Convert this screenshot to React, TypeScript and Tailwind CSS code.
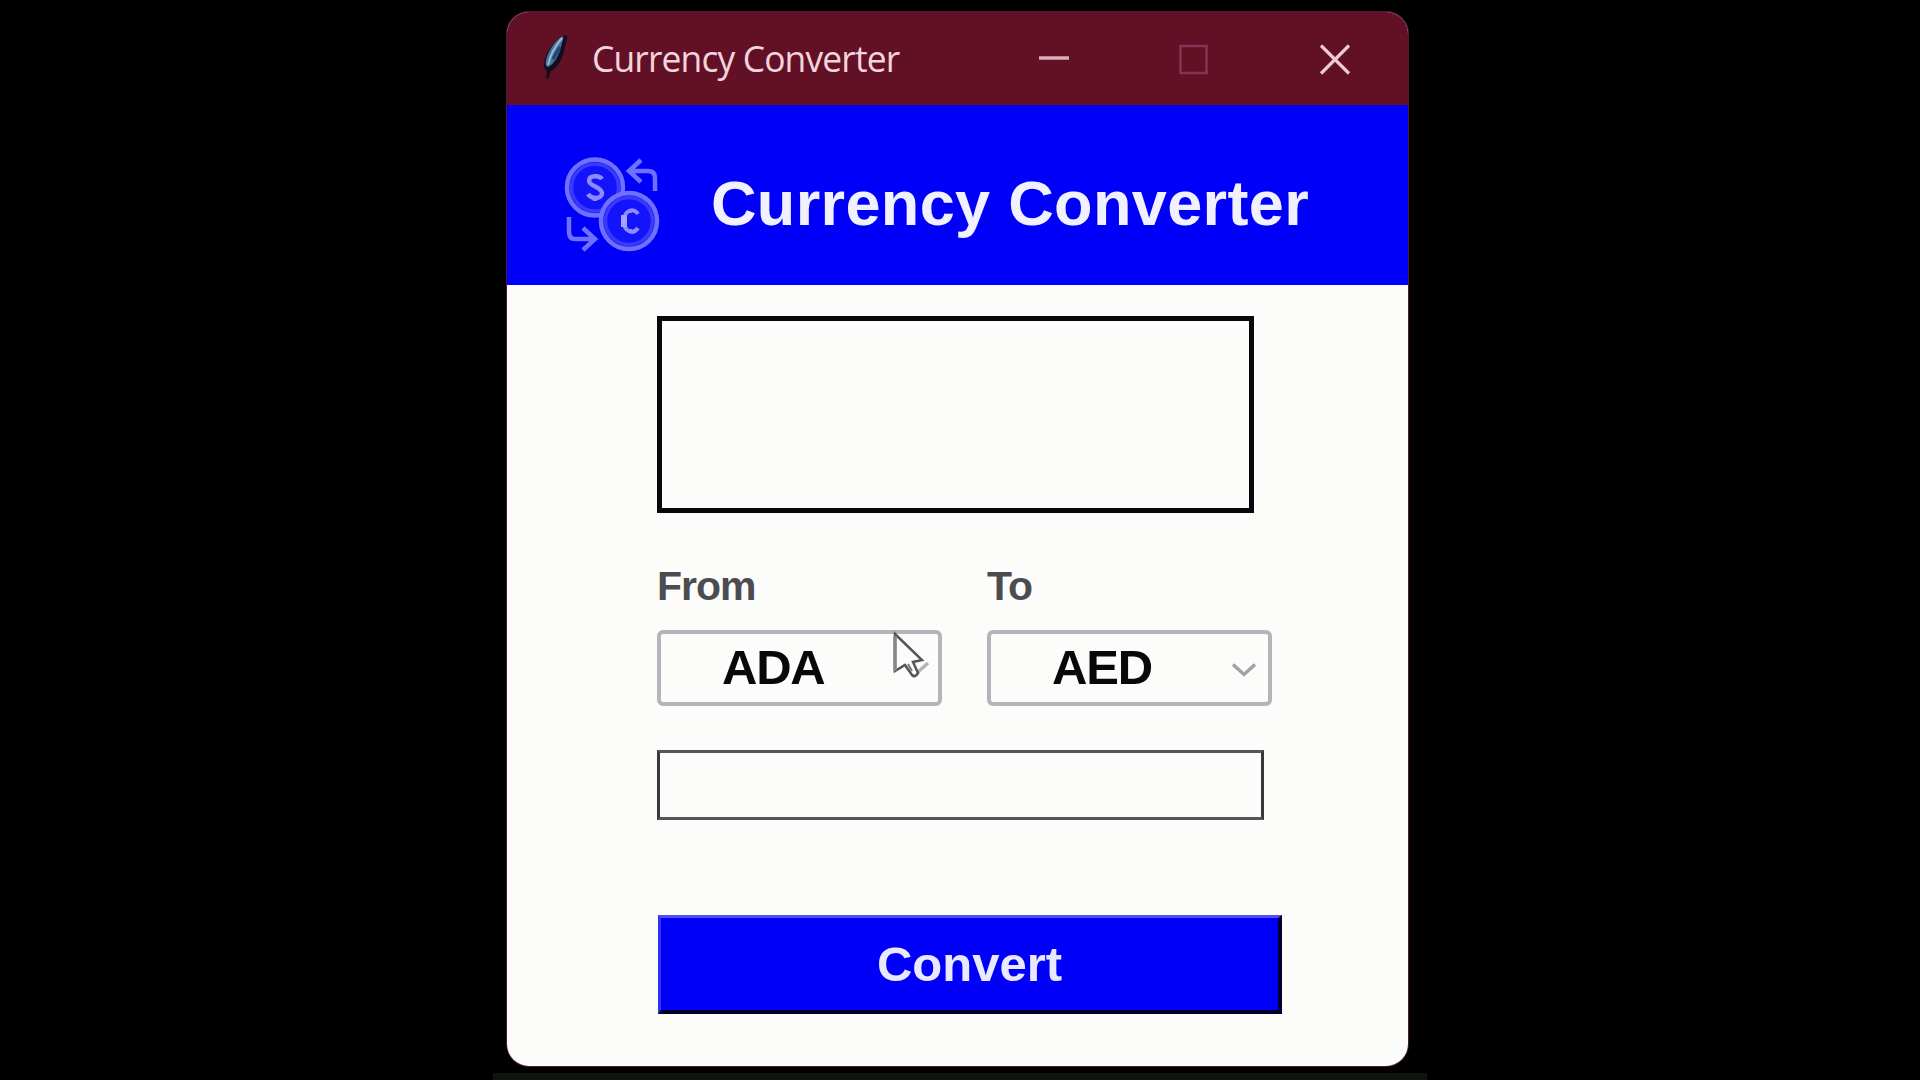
import React from 'react';

function Feather() {
  return (
    <svg className="mt-[19px] ml-[32px] h-[50px] w-[30px] shrink-0" viewBox="0 0 30 50">
      <path d="M28 4C19 5 9 17 6 28C4 34 5 38 8 40L7 48L10 47L12 40C19 37 24 27 26 16C27 11 29 7 28 4Z" fill="#140e1c" />
      <path d="M24 5C16 9 9 20 7 29C6 33 7 36 9 36C15 33 20 25 22 16C23 11 25 8 24 5Z" fill="#44709c" />
      <path d="M23 7C17 14 11 25 9 34" fill="none" stroke="#9cb8cc" strokeWidth="2" />
      <path d="M21 16L14 28" fill="none" stroke="#1c4478" strokeWidth="3" />
    </svg>
  );
}

function Coins() {
  return (
    <svg className="mt-[50px] ml-[55px] h-[100px] w-[100px] shrink-0" viewBox="0 0 100 100" fill="none" stroke="#7070ff" strokeWidth="4.5">
      <circle cx="33" cy="32.500" r="28" fill="#1414fa" />
      <circle cx="33" cy="32.500" r="23.500" stroke="#3a3afc" strokeWidth="3.5" />
      <path d="M40 24C37 20 27 20 27 26C28 32 39 31 40 38C40 45 29 44 26 39M34 19V23M33 42V46" stroke="#8c8cff" strokeWidth="4.5" />
      <circle cx="67" cy="66" r="28" fill="#1414fa" />
      <circle cx="67" cy="66" r="23.500" stroke="#3a3afc" strokeWidth="3.5" />
      <path d="M76 59C72 52 62 55 62 66C62 77 71 80 76 73M68 54V58M68 74V78" stroke="#8c8cff" strokeWidth="4" />
      <path d="M62 60V72" stroke="#a4a4ff" strokeWidth="6" />
      <path d="M93 36V23Q93 16 86 16H67M79 5L67 16L79 27" />
      <path d="M7 62V77Q7 84 13 84H32M21 73L33 84L21 95" />
    </svg>
  );
}

function Chevron() {
  return (
    <svg className="mt-[3px] h-[16px] w-[28px] shrink-0" viewBox="0 0 28 16" fill="none" stroke="#a2a2a8" strokeWidth="3.5">
      <path d="M3 2.5L14 12.5L25 2.5" />
    </svg>
  );
}

function Picker({ label, value, children }: { label: string; value: string; children?: React.ReactNode }) {
  return (
    <div className="w-[285px]">
      <div className="text-[41px] leading-[41px] font-bold tracking-[-1px] text-[#4c4c50]">{label}</div>
      <div className="relative mt-[23px] flex h-[76px] items-center justify-between rounded-[6px] border-4 border-[#b4b4ba] pr-[10px] pl-[61px]">
        <span className="-mt-[2px] text-[49px] leading-[49px] font-bold tracking-[-1.2px] text-[#080808]">{value}</span>
        {children ?? <Chevron />}
      </div>
    </div>
  );
}

export default function App() {
  return (
    <div className="flex h-[1080px] w-[1920px] flex-col overflow-hidden bg-black pt-[12px] font-['Liberation_Sans',Arial,sans-serif]">
      <div className="ml-[507px] h-[1054px] w-[901px] shrink-0 overflow-hidden rounded-[22px] bg-[#fcfcfb] shadow-[0_0_0_1px_#4c1838]">
        <div className="flex h-[93px] bg-[#621026]">
          <Feather />
          <div className="mt-[21px] ml-[23px] w-[316px] origin-left scale-x-[0.957] text-[37px] leading-[50px] tracking-[-0.9px] whitespace-nowrap text-[#f4d4dc] font-['Open_Sans','Noto_Sans',sans-serif]">
            Currency Converter
          </div>
          <svg className="mt-[31px] ml-[130px] h-[34px] w-[316px] shrink-0" viewBox="0 0 316 34" fill="none">
            <path d="M1 15H31" stroke="#dcacb8" strokeWidth="3.5" />
            <rect x="142.500" y="3" width="26" height="27" stroke="#843454" strokeWidth="2.5" />
            <path d="M283 2.500L311 30.500M311 2.500L283 30.500" stroke="#eccad2" strokeWidth="3.2" />
          </svg>
        </div>
        <div className="flex h-[180px] bg-[#0000f8]">
          <Coins />
          <div className="mt-[67px] ml-[49px] text-[63px] leading-[63px] font-bold tracking-[0.35px] whitespace-nowrap text-[#f0f0ff]">
            Currency Converter
          </div>
        </div>
        <div className="pl-[150px]">
          <div className="mt-[31px] h-[197px] w-[597px] border-[5px] border-[#08080c]" />
          <div className="mt-[53px] flex gap-[45px]">
            <Picker label="From" value="ADA">
              <svg className="absolute -top-[3px] left-[230px] h-[52px] w-[40px]" viewBox="0 0 40 52">
                <path d="M27 41L37 32" stroke="#b4b4ba" strokeWidth="3.5" />
                <path d="M4 3V40L14 34L21 44Q24 47 27 42L22 31L31 29Z" fill="#fcfcfb" stroke="#55555a" strokeWidth="2.5" />
                <path d="M4 5V40" stroke="#88888c" strokeWidth="3.5" />
                <path d="M17 33L21 40" stroke="#77777c" strokeWidth="2" />
              </svg>
            </Picker>
            <Picker label="To" value="AED" />
          </div>
          <div className="mt-[44px] h-[70px] w-[607px] border-[3px] border-[#55555a] border-x-[#38383c]" />
          <div className="mt-[95px] ml-px flex h-[99px] w-[624px] items-center justify-center border-4 border-t-[3px] border-l-[3px] border-t-[#5050f4] border-r-[#000030] border-b-[#000030] border-l-[#3030f4] bg-[#0000f8] text-[49px] leading-[49px] font-bold text-[#e8e8ff]">
            Convert
          </div>
        </div>
      </div>
      <div className="mt-[7px] ml-[493px] h-[7px] w-[934px] shrink-0 bg-[#10140f]" />
    </div>
  );
}
